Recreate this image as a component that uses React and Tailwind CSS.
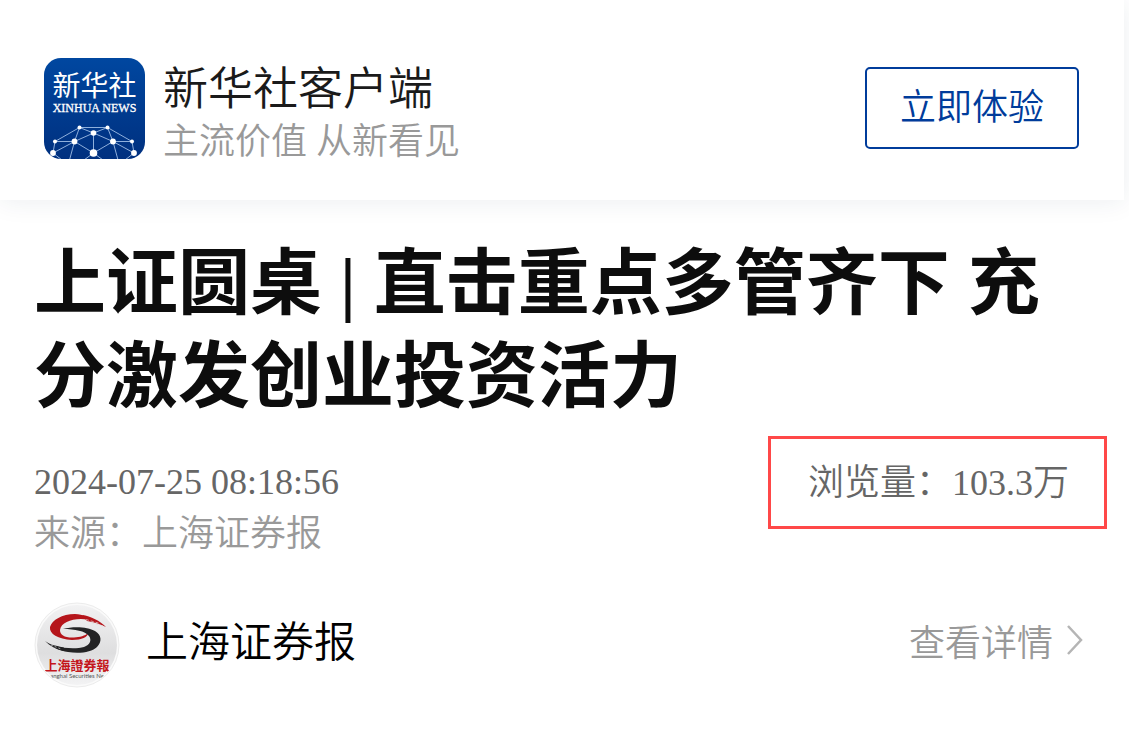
const NODES = [
  [35.5, 69.5, 2], [63.5, 69.5, 2], [49.5, 75, 2.8], [11, 83.5, 2], [30.5, 83.5, 2.9],
  [69, 83.5, 2.9], [88, 83.5, 2], [9, 95, 2.9], [49.5, 95, 3.8], [90, 95, 2.9],
];

const LINKS = [
  [0, 1], [0, 2], [1, 2], [0, 3], [1, 6], [0, 4], [1, 5], [2, 4], [2, 5], [2, 8],
  [3, 4], [5, 6], [3, 7], [6, 9], [4, 7], [5, 9], [4, 8], [5, 8],
];

function XinhuaLogo() {
  return (
    <svg viewBox="0 0 101 101" className="size-[101px] shrink-0" role="img" aria-label="新华社 XINHUA NEWS">
      <defs>
        <linearGradient id="xh-bg" x1="0" y1="0" x2="0" y2="1">
          <stop offset="0" stopColor="#0047a0" />
          <stop offset="1" stopColor="#00307f" />
        </linearGradient>
        <clipPath id="xh-clip">
          <rect width="101" height="101" rx="17" />
        </clipPath>
      </defs>
      <g clipPath="url(#xh-clip)">
        <rect width="101" height="101" fill="url(#xh-bg)" />
        <g stroke="#8fb0dc" strokeWidth="1">
          {LINKS.map(([a, b]) => (
            <line key={a + "-" + b} x1={NODES[a][0]} y1={NODES[a][1]} x2={NODES[b][0]} y2={NODES[b][1]} />
          ))}
          <path d="M30.5 83.5 L25.5 102 M69 83.5 L74 102 M9 95 L18 102 M90 95 L81 102 M49.5 95 L40 102 M49.5 95 L59 102" fill="none" />
        </g>
        {NODES.map(([x, y, r]) => (
          <circle key={x + "-" + y} cx={x} cy={y} r={r} fill="#fff" />
        ))}
      </g>
      <text x="50.5" y="38" textAnchor="middle" fill="#fff" className="font-['Liberation_Serif','Noto_Sans_CJK_SC',sans-serif] text-[28px] font-normal">新华社</text>
      <text x="50.5" y="54" textAnchor="middle" fill="#fff" stroke="#fff" strokeWidth="0.3" className="font-['Liberation_Serif',serif] text-[12px] font-normal">XINHUA NEWS</text>
    </svg>
  );
}

function PublisherLogo() {
  return (
    <svg viewBox="0 0 86 86" className="size-[86px] shrink-0" role="img" aria-label="上海證券報">
      <defs>
        <linearGradient id="pb-bg" x1="0" y1="0" x2="0" y2="1">
          <stop offset="0" stopColor="#f2f2f3" />
          <stop offset="0.6" stopColor="#dededf" />
          <stop offset="1" stopColor="#f3f3f4" />
        </linearGradient>
        <clipPath id="pb-clip">
          <circle cx="43" cy="43" r="41" />
        </clipPath>
      </defs>
      <circle cx="43" cy="43" r="42" fill="#fafafa" stroke="#ececec" strokeWidth="1" />
      <circle cx="43" cy="43" r="40" fill="url(#pb-bg)" />
      <path d="M60 20 C56 16 49 12 41 12 C28 12 18 18 16 25 C15 32 24 37 38 38 C48 38 54 35 54 31 C51 34 46 35 40 35.5 C31 36 26 33 26 28 C27 21 36 17 47 17 C52 17 56 18 60 20Z" fill="#b5151b" />
      <path d="M48 13 C57 14 66 19 72 25 C66 22 60 20 53 19Z" fill="#b5151b" />
      <path d="M52 17.500 L66 21.500 M57 20.500 L69 24" stroke="#e4d5d6" strokeWidth="0.7" strokeDasharray="3 2" fill="none" />
      <path d="M29 27 C40 24 54 25 61 29 C68 33 68 40 63 45 C58 50 46 52 34 50 C30 49.500 25 48 21 46 L22 44 C30 46.500 43 47 50 45 C56 43 58 38 55 34 C51 29 41 27 29 27Z" fill="#232324" />
      <path d="M11 39 C16 43 23 44 30 45.500 L29 49 C22 47 16 44 11 39Z" fill="#232324" />
      <path d="M17 43 L27 47" stroke="#cfcfd0" strokeWidth="0.7" strokeDasharray="2 2" fill="none" />
      <g clipPath="url(#pb-clip)">
        <text x="43" y="68" textAnchor="middle" fill="#c4161c" className="font-['Liberation_Serif','Noto_Sans_CJK_TC',sans-serif] text-[13px] font-bold">上海證券報</text>
        <text x="43" y="76" textAnchor="middle" fill="#555" className="font-['Lato',sans-serif] text-[6px] font-normal">anghai Securities Ne</text>
      </g>
    </svg>
  );
}

export default function App() {
  return (
    <div className="font-['Liberation_Serif','Noto_Sans_CJK_SC',serif] font-[350] text-[#0d0d0d]">
      <header className="mr-[5px] flex h-[200px] items-center justify-between bg-white pt-4 pr-[45px] pl-11 shadow-[0_2px_24px_rgba(30,50,80,0.08)]">
        <div className="flex items-center gap-[18px]">
          <XinhuaLogo />
          <div className="pt-[10px]">
            <p className="text-[45px] leading-[58px] text-[#1a1a1a]">新华社客户端</p>
            <p className="text-[36px] leading-[46px] text-[#999]">主流价值 从新看见</p>
          </div>
        </div>
        <button type="button" className="rounded-[5px] border-2 border-[#003c9b] px-[33px] py-3 text-[36px] leading-[54px] text-[#003c9b]">
          立即体验
        </button>
      </header>

      <main className="pt-[38px] pr-[22px] pl-[34px]">
        <h1 className="pr-10 text-[72px] leading-[93px] font-bold">上证圆桌 | 直击重点多管齐下 充分激发创业投资活力</h1>

        <div className="mt-3 flex items-start justify-between">
          <div className="pt-5 text-[36px] leading-[52px]">
            <time className="block text-[#666]">2024-07-25 08:18:56</time>
            <p className="text-[#999]">来源：上海证券报</p>
          </div>
          <p className="border-3 border-[#ff4848] pt-[19px] pr-[35px] pb-[17px] pl-[37px] text-[36px] leading-[51px] text-[#666]">浏览量：103.3万</p>
        </div>

        <div className="mt-[42px] flex items-center justify-between pr-6">
          <div className="flex items-center gap-[26px]">
            <PublisherLogo />
            <span className="pb-1 text-[42px] leading-[60px] text-black">上海证券报</span>
          </div>
          <a href="#publisher" className="flex items-start gap-[14px] pb-[2px] text-[36px] leading-[54px] text-[#999]">
            查看详情
            <svg viewBox="0 0 16 30" className="mt-2 h-[30px] w-4" fill="none" stroke="#b5b5b5" strokeWidth="2.500" aria-hidden="true">
              <path d="M1 1 L14 15 L1 29" />
            </svg>
          </a>
        </div>
      </main>
    </div>
  );
}
